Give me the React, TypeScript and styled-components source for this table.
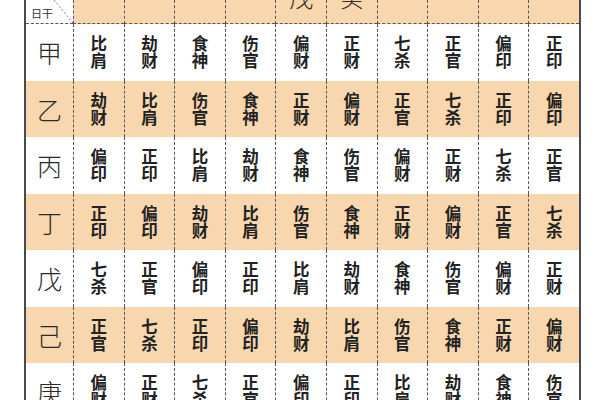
import styled, { createGlobalStyle } from "styled-components";

const STEMS = ["甲", "乙", "丙", "丁", "戊", "己", "庚"];

const GODS: string[][] = [
  ["比肩", "劫财", "食神", "伤官", "偏财", "正财", "七杀", "正官", "偏印", "正印"],
  ["劫财", "比肩", "伤官", "食神", "正财", "偏财", "正官", "七杀", "正印", "偏印"],
  ["偏印", "正印", "比肩", "劫财", "食神", "伤官", "偏财", "正财", "七杀", "正官"],
  ["正印", "偏印", "劫财", "比肩", "伤官", "食神", "正财", "偏财", "正官", "七杀"],
  ["七杀", "正官", "偏印", "正印", "比肩", "劫财", "食神", "伤官", "偏财", "正财"],
  ["正官", "七杀", "正印", "偏印", "劫财", "比肩", "伤官", "食神", "正财", "偏财"],
  ["偏财", "正财", "七杀", "正官", "偏印", "正印", "比肩", "劫财", "食神", "伤官"],
];

// only the bottoms of the title glyphs show at the top edge
const HEADER = ["", "", "", "", "戊", "癸", "", "", "", ""];

const PEACH = "#f9d7ae";

export default function App() {
  return (
    <>
      <GlobalStyle />
      <Page>
        <Table>
          <Row $shaded={false}>
            <Corner>
              <CornerLine width="48" height="23" viewBox="0 0 48 23">
                <line x1="28" y1="0" x2="47" y2="23" stroke="#777" strokeWidth="1" strokeDasharray="2 2" />
              </CornerLine>
              <CornerLabel>日干</CornerLabel>
            </Corner>
            {HEADER.map((h, i) => (
              <HeadCell key={i}>
                <HeadText>{h}</HeadText>
              </HeadCell>
            ))}
          </Row>
          {STEMS.map((stem, r) => (
            <Row key={stem} $shaded={r % 2 === 1}>
              <Label>{stem}</Label>
              {GODS[r].map((god, c) => (
                <Cell key={c}>
                  <span>{god[0]}</span>
                  <span>{god[1]}</span>
                </Cell>
              ))}
            </Row>
          ))}
        </Table>
      </Page>
    </>
  );
}

const GlobalStyle = createGlobalStyle`
  html, body {
    margin: 0;
    overflow: hidden;
    background: #ffffff;
    font-family: "Noto Sans CJK SC", "Noto Sans", sans-serif;
  }
`;

const Page = styled.div`
  width: 600px;
  height: 400px;
  padding-left: 24px;
  box-sizing: border-box;
  overflow: hidden;
`;

const Table = styled.div`
  width: 553px;
  display: flex;
  flex-direction: column;
  border-left: 2px solid #4a4a4a;
  border-right: 2px solid #4a4a4a;
`;

const Row = styled.div<{ $shaded: boolean }>`
  display: grid;
  grid-template-columns: 47px repeat(9, 50.6px) 1fr;
  height: 56.5px;
  background: ${({ $shaded }) => ($shaded ? PEACH : "#ffffff")};

  &:first-child {
    height: 24px;
  }
`;

const Corner = styled.div`
  position: relative;
  background: #ffffff;
  border-bottom: 1px dashed #555;
`;

const CornerLine = styled.svg`
  position: absolute;
  top: 0;
  left: 0;
`;

const CornerLabel = styled.div`
  position: absolute;
  left: 5px;
  bottom: 4px;
  font-size: 11px;
  line-height: 12px;
  color: #333;
`;

const HeadCell = styled.div`
  display: flex;
  align-items: flex-end;
  justify-content: center;
  overflow: hidden;
  padding-bottom: 14px;
  background: ${PEACH};
  border-left: 1px dashed #555;
  border-bottom: 1px dashed #555;
`;

const HeadText = styled.span`
  font-size: 24px;
  line-height: 24px;
  font-weight: 300;
  color: #3a2a20;
`;

const Label = styled.div`
  display: flex;
  align-items: center;
  justify-content: center;
  font-size: 25px;
  font-weight: 300;
  color: #2a2a2a;
`;

const Cell = styled.div`
  display: flex;
  flex-direction: column;
  align-items: center;
  justify-content: center;
  border-left: 1px dashed #555;
  font-size: 16.5px;
  line-height: 17px;
  font-weight: 700;
  color: #222;
`;
